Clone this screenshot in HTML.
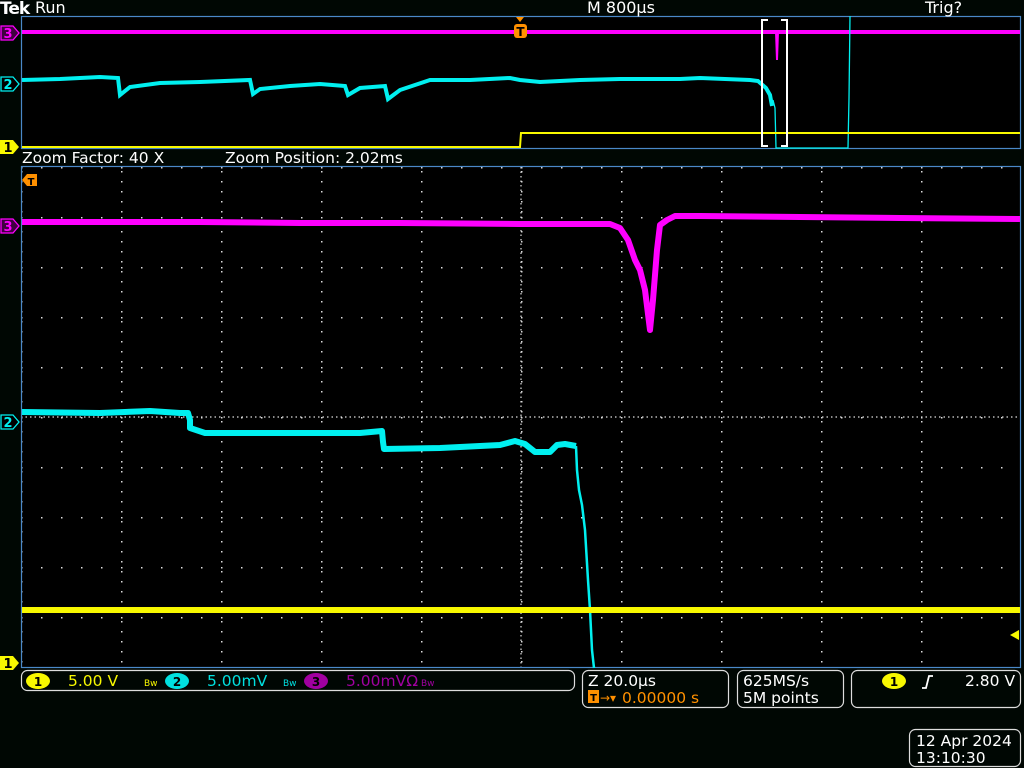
<!DOCTYPE html>
<html><head><meta charset="utf-8"><style>
html,body{margin:0;padding:0;background:#000703;width:1024px;height:768px;overflow:hidden}
svg{display:block}
text{font-family:"DejaVu Sans","Liberation Sans",sans-serif}
</style></head><body>
<svg width="1024" height="768" viewBox="0 0 1024 768" xmlns="http://www.w3.org/2000/svg">
<defs>
<pattern id="vd" x="21" y="167" width="100" height="10" patternUnits="userSpaceOnUse"><rect x="0" y="4" width="1.5" height="1.5" fill="#ddd"/></pattern>
<pattern id="hd" x="21" y="167" width="20" height="50" patternUnits="userSpaceOnUse"><rect x="0" y="0" width="1.5" height="1.5" fill="#ddd"/></pattern>
</defs>
<rect width="1024" height="768" fill="#000703"/>
<rect x="21" y="16" width="1000" height="133" fill="#000"/>
<rect x="21.5" y="16.5" width="999" height="132" fill="none" stroke="#4a88c8" stroke-width="1.2"/>
<rect x="21" y="167" width="1000" height="500" fill="#000"/>
<rect x="21" y="167" width="1000" height="500" fill="url(#vd)"/>
<rect x="21" y="167" width="1000" height="500" fill="url(#hd)"/>
<line x1="521" y1="167" x2="521" y2="667" stroke="#ddd" stroke-width="1.2" stroke-dasharray="1.5 3"/>
<line x1="21" y1="417" x2="1021" y2="417" stroke="#ddd" stroke-width="1.2" stroke-dasharray="1.5 3"/>
<rect x="21.5" y="166.5" width="999" height="501" fill="none" stroke="#4a88c8" stroke-width="1.2"/>

<line x1="22" y1="32" x2="1020" y2="32" stroke="#ff00ff" stroke-width="4"/>
<polyline points="776,32 777,60 778,32" fill="none" stroke="#ff00ff" stroke-width="2"/>
<polyline points="22,80 60,79 100,77 118,78 120,95 130,87 160,83 200,82 250,80 253,94 260,89 290,86 320,84 345,86 348,95 360,88 385,86 388,99 400,90 430,80 470,80 510,78 520,80 540,82 580,80 620,79 680,79 700,78 750,80 758,81 766,88 770,95 772,106" fill="none" stroke="#00f0f0" stroke-width="4"/>
<polyline points="773,100 775,108 776,148 848,148 849,98 850,16" fill="none" stroke="#00f0f0" stroke-width="1.3"/>
<polyline points="22,147 520,147 521,133 1020,133" fill="none" stroke="#f8f800" stroke-width="2"/>
<path d="M768,20 H762 V146 H768 M781,20 H787 V146 H781" fill="none" stroke="#fff" stroke-width="2"/>
<path d="M516,17 L524,17 L520,22 Z" fill="#ff9000"/>
<rect x="514" y="24" width="13" height="14" rx="3" fill="#ff9000"/>
<text x="520.5" y="36" font-size="12" font-weight="bold" fill="#000" text-anchor="middle">T</text>

<polyline points="22,222 200,222 300,223 400,223 520,224 610,224 620,228 628,240 635,260 640,270 645,290 650,330 653,300 657,250 660,225 667,220 675,216 700,216 800,217 900,218 1020,219" fill="none" stroke="#ff00ff" stroke-width="6" stroke-linejoin="round"/>
<polyline points="22,412 100,413 150,411 180,413 188,413 190,420 190,428 205,433 300,433 360,433 382,431 383,442 384,449 440,448 500,445 515,441 525,444 535,452 550,452 557,445 565,444 576,446" fill="none" stroke="#00f0f0" stroke-width="6" stroke-linejoin="round"/>
<polyline points="576,446 577,470 579,490 582,505 585,530 588,580 590,610 592,650 594,668" fill="none" stroke="#00f0f0" stroke-width="2.5" stroke-linejoin="round"/>
<line x1="22" y1="610" x2="1020" y2="610" stroke="#f8f800" stroke-width="6"/>
<path d="M1010,635 L1019,630 L1019,640 Z" fill="#f8f800"/>
<path d="M22,180 L27,174 L37,174 L37,186 L27,186 Z" fill="#ff9000"/>
<text x="31" y="185" font-size="10" font-weight="bold" fill="#000" text-anchor="middle">T</text>

<g font-size="13" font-weight="bold" text-anchor="middle">
<path d="M1,26 H13 L19,33 L13,40 H1 Z" fill="#400040" stroke="#ff00ff" stroke-width="1.3"/><text x="8" y="38" fill="#ff00ff">3</text>
<path d="M1,77 H13 L19,84 L13,91 H1 Z" fill="#000" stroke="#00f0f0" stroke-width="1.3"/><text x="8" y="89" fill="#00f0f0">2</text>
<path d="M0,140 H13 L19,147 L13,154 H0 Z" fill="#f8f800"/><text x="8" y="152" fill="#000">1</text>
<path d="M1,219 H13 L19,226 L13,233 H1 Z" fill="#400040" stroke="#ff00ff" stroke-width="1.3"/><text x="8" y="231" fill="#ff00ff">3</text>
<path d="M1,415 H13 L19,422 L13,429 H1 Z" fill="#000" stroke="#00f0f0" stroke-width="1.3"/><text x="8" y="427" fill="#00f0f0">2</text>
<path d="M0,656 H13 L19,663 L13,670 H0 Z" fill="#f8f800"/><text x="8" y="668" fill="#000">1</text>
</g>

<text x="0" y="14" font-size="17" font-weight="bold" fill="#fff" letter-spacing="-1">Tek</text>
<text x="35" y="13" font-size="16" fill="#fff">Run</text>
<text x="587" y="13" font-size="16" fill="#fff">M 800µs</text>
<text x="925" y="13" font-size="16" fill="#fff">Trig?</text>
<text x="22" y="163" font-size="15.5" fill="#fff">Zoom Factor: 40 X</text>
<text x="225" y="163" font-size="15.5" fill="#fff">Zoom Position: 2.02ms</text>

<g fill="none" stroke="#ddd" stroke-width="1.2">
<rect x="21.5" y="670.5" width="553" height="20" rx="6"/>
<rect x="582.5" y="670.5" width="146" height="37" rx="6"/>
<rect x="737.5" y="670.5" width="106" height="37" rx="6"/>
<rect x="851.5" y="670.5" width="169" height="37" rx="6"/>
<rect x="909.5" y="729.5" width="111" height="37" rx="6"/>
</g>
<g font-size="15.5">
<ellipse cx="38" cy="681" rx="12" ry="8" fill="#f8f800"/><text x="38" y="686" fill="#000" font-size="12" font-weight="bold" text-anchor="middle">1</text>
<text x="68" y="686" fill="#f8f800">5.00 V</text>
<text x="144" y="686" fill="#f8f800" font-size="9">Bw</text>
<ellipse cx="177" cy="681" rx="12" ry="8" fill="#00e0e0"/><text x="177" y="686" fill="#000" font-size="12" font-weight="bold" text-anchor="middle">2</text>
<text x="207" y="686" fill="#00e0e0">5.00mV</text>
<text x="283" y="686" fill="#00e0e0" font-size="9">Bw</text>
<ellipse cx="316" cy="681" rx="12" ry="8" fill="#a000a0"/><text x="316" y="686" fill="#000" font-size="12" font-weight="bold" text-anchor="middle">3</text>
<text x="346" y="686" fill="#a000a0">5.00mVΩ</text>
<text x="421" y="686" fill="#a000a0" font-size="9">Bw</text>
<text x="588" y="686" fill="#fff">Z 20.0µs</text>
<rect x="588" y="690" width="11" height="13" fill="#ff9000"/><text x="593.5" y="701" fill="#000" font-size="10" font-weight="bold" text-anchor="middle">T</text>
<text x="600" y="702" fill="#ff9000" font-size="12">→▾</text>
<text x="622" y="703" fill="#ff9000">0.00000 s</text>
<text x="743" y="686" fill="#fff">625MS/s</text>
<text x="743" y="703" fill="#fff">5M points</text>
<ellipse cx="894" cy="681" rx="12" ry="8" fill="#f8f800"/><text x="894" y="686" fill="#000" font-size="12" font-weight="bold" text-anchor="middle">1</text>
<path d="M922,688 L926,688 L929,676 L933,676" fill="none" stroke="#fff" stroke-width="1.8"/>
<text x="965" y="686" fill="#fff">2.80 V</text>
<text x="916" y="746" fill="#fff">12 Apr  2024</text>
<text x="916" y="763" fill="#fff">13:10:30</text>
</g>
</svg>
</body></html>
